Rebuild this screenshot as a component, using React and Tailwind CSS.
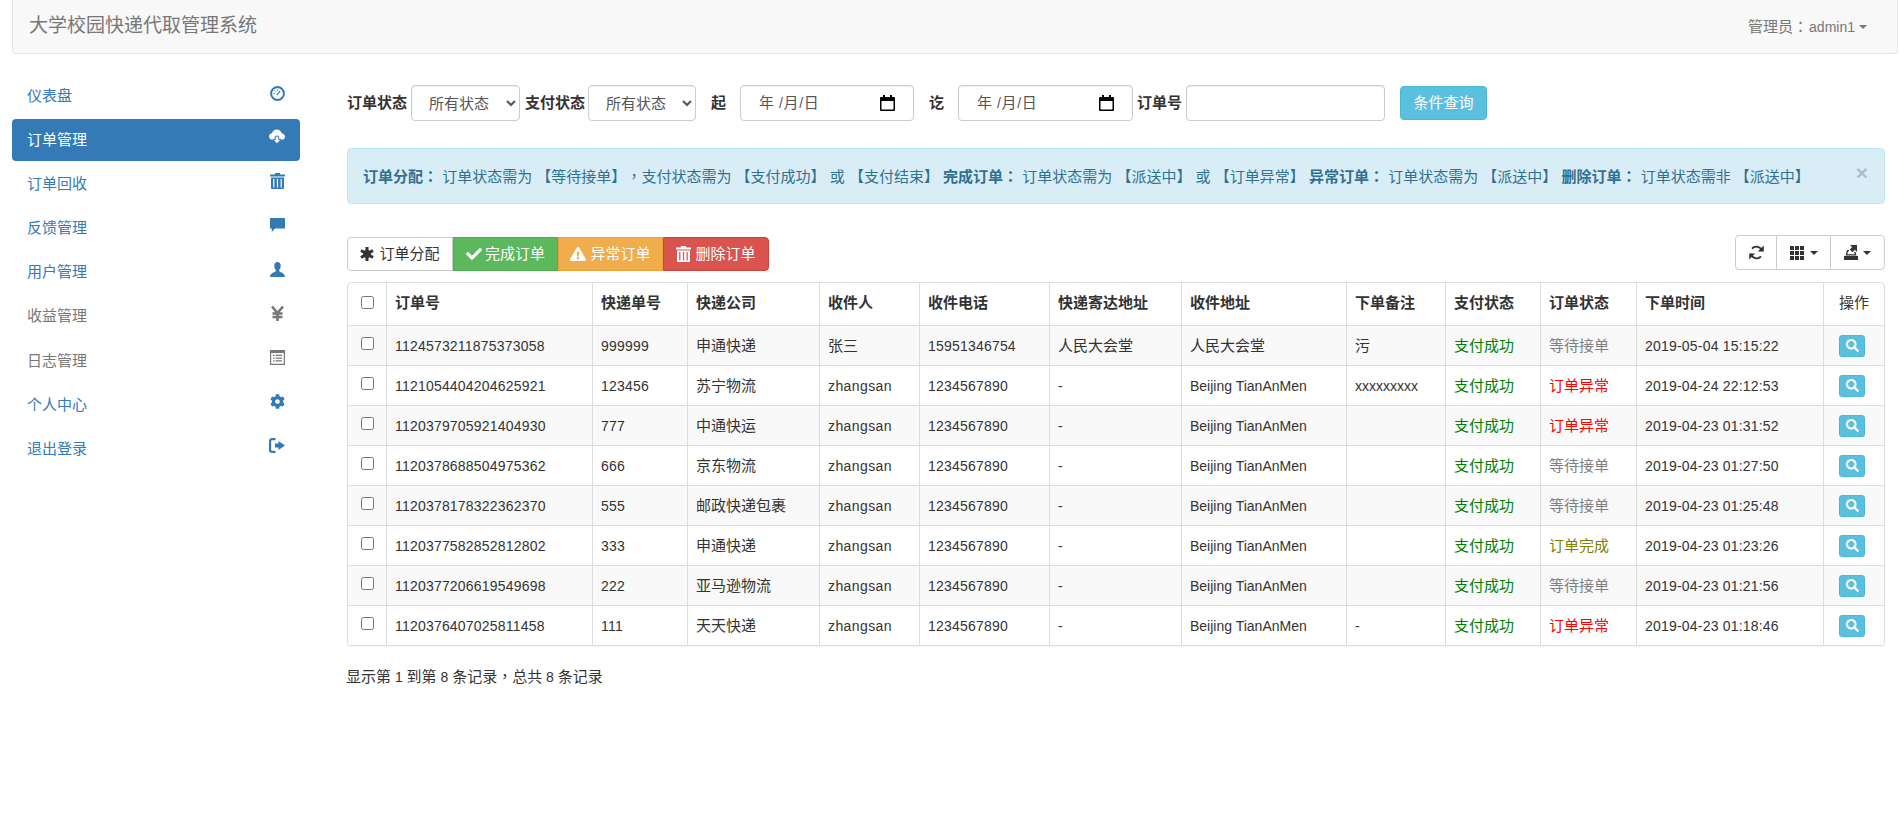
import { FaCheck, FaCog, FaExclamationTriangle, FaSearch } from "react-icons/fa";

const DashIcon = () => (
  <svg width="15" height="15" viewBox="0 0 15 15" fill="none" stroke="currentColor">
    <circle cx="7.5" cy="7.5" r="6.4" strokeWidth="2" />
    <path d="M6.8 9.2 10.2 4.8" strokeWidth="1.2" />
    <path d="M3.5 7.5h1.2M7.5 3.4v1.2M4.6 4.7l.8.8" strokeWidth="1" />
  </svg>
);
const CloudIcon = () => (
  <svg width="16" height="16" viewBox="0 0 16 16" fill="currentColor">
    <path d="M3.5 10.8C1.5 10.8 0 9.3 0 7.5 0 5.8 1.3 4.5 3 4.3 3.6 2 5.5.6 7.8.6c2.5 0 4.5 1.7 5 4 1.8.2 3.2 1.4 3.2 3.1 0 1.7-1.4 3.1-3.2 3.1z" />
    <path d="M6.3 7.2h3.4v3.2H12L8 15 4 10.4h2.3z" stroke="#337ab7" strokeWidth="1" />
  </svg>
);
const TrashIcon = () => (
  <svg width="15" height="16" viewBox="0 0 15 16" fill="currentColor">
    <path d="M5.2 0h4.6l.5 1.5H15v2H0v-2h4.7z" />
    <path fillRule="evenodd" d="M1 4.5h13V15a1 1 0 0 1-1 1H2a1 1 0 0 1-1-1zM3.2 6v8.500h1.200V6zM6.900 6v8.500h1.200V6zM10.600 6v8.500h1.200V6z" />
  </svg>
);
const CommentIcon = () => (
  <svg width="15" height="14" viewBox="0 0 15 14" fill="currentColor">
    <path d="M0 0h15v10.500H5L1.800 14v-3.500H0z" />
  </svg>
);
const UserIcon = () => (
  <svg width="15" height="15" viewBox="0 0 15 15" fill="currentColor">
    <path d="M7.500 0C5.500 0 4.300 1.500 4.300 3.700c0 1.500.5 3 1.400 4v1.500C4 10.500 0 11 0 15h15c0-4-4-4.500-5.700-5.800V7.700c.9-1 1.400-2.500 1.400-4C10.700 1.500 9.500 0 7.500 0z" />
  </svg>
);
const YenIcon = () => (
  <svg width="15" height="15" viewBox="0 0 15 15" fill="none" stroke="currentColor" strokeWidth="2.600">
    <path d="M2 .5 7.500 7 13 .5M7.500 7v8M2.500 7.500h10M2.500 11h10" />
  </svg>
);
const ListIcon = () => (
  <svg width="15" height="15" viewBox="0 0 15 15" fill="currentColor">
    <path fillRule="evenodd" d="M0 0h15v15H0zM1.200 3v10.800h12.600V3z" />
    <path d="M3 4.800h1.500V6H3zM5.500 4.800H12V6H5.500zM3 7.500h1.500v1.200H3zM5.500 7.500H12v1.200H5.500zM3 10.200h1.500v1.200H3zM5.500 10.200H12v1.200H5.500z" />
  </svg>
);
const LogoutIcon = () => (
  <svg width="16" height="15" viewBox="0 0 16 15" fill="currentColor">
    <path d="M6.500 1.200H3a2 2 0 0 0-2 2v8.600a2 2 0 0 0 2 2h3.500" fill="none" stroke="currentColor" strokeWidth="2.300" />
    <path d="M6 5.500h3.500V3l6.500 4.500L9.500 12V9.500H6z" />
  </svg>
);
const AsteriskIcon = () => (
  <svg width="14" height="14" viewBox="0 0 14 14" fill="none" stroke="currentColor" strokeWidth="3">
    <circle cx="7" cy="7" r="2.500" fill="currentColor" />
    <path d="M7 0v14M1 3.500l12 7M13 3.500l-12 7" />
  </svg>
);
const TrashSmall = () => (
  <svg width="15" height="16" viewBox="0 0 15 16" fill="currentColor">
    <path d="M5.200 0h4.600l.5 1.500H15v2H0v-2h4.700z" />
    <path fillRule="evenodd" d="M1 4.500h13V15a1 1 0 0 1-1 1H2a1 1 0 0 1-1-1zM3.200 6v8.500h1.200V6zM6.900 6v8.500h1.200V6zM10.600 6v8.500h1.200V6z" />
  </svg>
);
const RefreshIcon = () => (
  <svg width="15" height="15" viewBox="0 0 15 15" fill="currentColor">
    <path d="M13 6.200A5.800 5.800 0 0 0 3 3.600M2 8.800a5.800 5.800 0 0 0 10 2.600" fill="none" stroke="currentColor" strokeWidth="1.800" />
    <path d="M14.800.6v6h-6zM.2 14.400v-6h6z" />
  </svg>
);
const GridIcon = () => (
  <svg width="14" height="14" viewBox="0 0 14 14" fill="currentColor">
    <path d="M0 0h4v4H0zM5 0h4v4H5zM10 0h4v4h-4zM0 5h4v4H0zM5 5h4v4H5zM10 5h4v4h-4zM0 10h4v4H0zM5 10h4v4H5zM10 10h4v4h-4z" />
  </svg>
);
const ExportIcon = () => (
  <svg width="14" height="15" viewBox="0 0 14 15" fill="currentColor">
    <path d="M0 11h14v4H0z" />
    <path d="M1.500 10.500 3 5h2v1.300H4.100L3.300 9.300h7.400L10.200 7h1.300l1 3.500z" />
    <path d="M6 0h7v7l-2.200-2.200L8.400 7.200 5.800 4.600 8.200 2.200z" />
  </svg>
);
const CalendarIcon = () => (
  <svg width="15" height="16" viewBox="0 0 15 16" fill="currentColor">
    <path fillRule="evenodd" d="M3 0h2v2h5V0h2v2h2a1 1 0 0 1 1 1v12a1 1 0 0 1-1 1H1a1 1 0 0 1-1-1V3a1 1 0 0 1 1-1h2zM1.500 6v8.500h12V6z" />
  </svg>
);
const Caret = () => (
  <span className="inline-block w-0 h-0 border-x-[4px] border-x-transparent border-t-[4px] border-t-current" />
);
// centered full-width punctuation, as in the picture
const Punct = ({ children }) => <span className="font-['Noto_Sans_CJK_TC',sans-serif]">{children}</span>;

const menu = [
  { label: "仪表盘", Icon: DashIcon },
  { label: "订单管理", Icon: CloudIcon, active: true },
  { label: "订单回收", Icon: TrashIcon },
  { label: "反馈管理", Icon: CommentIcon },
  { label: "用户管理", Icon: UserIcon },
  { label: "收益管理", Icon: YenIcon, muted: true },
  { label: "日志管理", Icon: ListIcon, muted: true },
  { label: "个人中心", Icon: FaCog },
  { label: "退出登录", Icon: LogoutIcon },
];

const heads = ["订单号", "快递单号", "快递公司", "收件人", "收件电话", "快递寄达地址", "收件地址", "下单备注", "支付状态", "订单状态", "下单时间"];

const rows = [
  ["1124573211875373058", "999999", "申通快递", "张三", "15951346754", "人民大会堂", "人民大会堂", "污", "等待接单", "2019-05-04 15:15:22"],
  ["1121054404204625921", "123456", "苏宁物流", "zhangsan", "1234567890", "-", "Beijing TianAnMen", "xxxxxxxxx", "订单异常", "2019-04-24 22:12:53"],
  ["1120379705921404930", "777", "中通快运", "zhangsan", "1234567890", "-", "Beijing TianAnMen", "", "订单异常", "2019-04-23 01:31:52"],
  ["1120378688504975362", "666", "京东物流", "zhangsan", "1234567890", "-", "Beijing TianAnMen", "", "等待接单", "2019-04-23 01:27:50"],
  ["1120378178322362370", "555", "邮政快递包裹", "zhangsan", "1234567890", "-", "Beijing TianAnMen", "", "等待接单", "2019-04-23 01:25:48"],
  ["1120377582852812802", "333", "申通快递", "zhangsan", "1234567890", "-", "Beijing TianAnMen", "", "订单完成", "2019-04-23 01:23:26"],
  ["1120377206619549698", "222", "亚马逊物流", "zhangsan", "1234567890", "-", "Beijing TianAnMen", "", "等待接单", "2019-04-23 01:21:56"],
  ["1120376407025811458", "111", "天天快递", "zhangsan", "1234567890", "-", "Beijing TianAnMen", "-", "订单异常", "2019-04-23 01:18:46"],
];

const statusColor = {
  等待接单: "text-[#808080]",
  订单异常: "text-[#ff0000]",
  订单完成: "text-[#808000]",
};

const cellText = (s) => {
  if (/[\u4e00-\u9fa5]/.test(s)) return "text-[15px]";
  if (/^[\d\- :]+$/.test(s)) return "text-[14px] tracking-[0.2px]";
  if (s === "zhangsan") return "text-[14px] tracking-[0.4px]";
  return "text-[14px]";
};

const DateBox = ({ className }) => (
  <div className={`h-[36px] w-[174px] flex items-center justify-between pl-[18px] pr-[18px] bg-white border border-[#ccc] rounded shadow-[inset_0_1px_1px_rgba(0,0,0,0.075)] text-[#555] text-[15px] ${className}`}>
    <span className="tracking-[0.6px]">年<span className="text-[14px]"> /</span>月<span className="text-[14px]">/</span>日</span>
    <span className="text-black"><CalendarIcon /></span>
  </div>
);

const StatusSelect = ({ className }) => (
  <select className={`h-[36px] w-[108px] pl-[13px] bg-white border border-[#ccc] rounded text-[#555] text-[15px] shadow-[inset_0_1px_1px_rgba(0,0,0,0.075)] ${className}`}>
    <option>所有状态</option>
  </select>
);

const Cell = ({ children, className = "" }) => (
  <td className={`h-[40px] px-[8px] border-t border-l border-[#ddd] align-middle whitespace-nowrap overflow-hidden ${cellText(String(children))} ${className}`}>
    {children}
  </td>
);

export default function App() {
  return (
    <div className="min-h-[838px] bg-white text-[#333] text-[14px] leading-[20px] font-['Liberation_Sans','Noto_Sans_CJK_SC',sans-serif] [text-spacing-trim:space-all]">
      {/* Navbar */}
      <div className="ml-[12px] mr-[1px] h-[54px] flex items-center justify-between pl-[16px] pr-[30px] bg-[#f8f8f8] border border-t-0 border-[#e7e7e7] rounded-b text-[#777]">
        <span className="text-[19px] -translate-y-px">大学校园快递代取管理系统</span>
        <span className="flex items-center">
          <span className="text-[15px]">管理员<Punct>：</Punct></span>
          <span className="ml-[1px]">admin1</span>
          <span className="ml-[4px] flex"><Caret /></span>
        </span>
      </div>

      <div className="flex">
        {/* Sidebar */}
        <div className="ml-[12px] w-[288px] mt-[21px] flex flex-col gap-[2.1px]">
          {menu.map(({ label, Icon, active, muted }) => (
            <div
              key={label}
              className={`h-[42px] px-[15px] flex items-center justify-between rounded text-[15px] ${active ? "bg-[#337ab7] text-white" : muted ? "text-[#777]" : "text-[#337ab7]"}`}
            >
              <span>{label}</span>
              <span className="-translate-y-[3px]"><Icon size={15} /></span>
            </div>
          ))}
        </div>

        {/* Main */}
        <div className="ml-[47px] w-[1538px]">
          <div className="mt-[31px] h-[36px] flex items-center">
            <b className="w-[60px] text-[15px]">订单状态</b>
            <StatusSelect className="ml-[4px] !w-[109px]" />
            <b className="ml-[5px] w-[60px] text-[15px]">支付状态</b>
            <StatusSelect className="ml-[3px]" />
            <b className="ml-[15px] w-[15px] text-[15px]">起</b>
            <DateBox className="ml-[14px]" />
            <b className="ml-[15px] w-[15px] text-[15px]">讫</b>
            <DateBox className="ml-[14px] !w-[175px]" />
            <b className="ml-[4px] w-[45px] text-[15px]">订单号</b>
            <input className="ml-[4px] h-[36px] w-[199px] px-3 bg-white border border-[#ccc] rounded shadow-[inset_0_1px_1px_rgba(0,0,0,0.075)]" />
            <button className="ml-[15px] h-[34px] w-[87px] bg-[#5bc0de] border border-[#46b8da] rounded text-white text-[15px]">条件查询</button>
          </div>

          {/* Rules alert */}
          <div className="mt-[27px] h-[56px] pl-[15px] pr-[16px] flex items-center justify-between bg-[#d9edf7] border border-[#bce8f1] rounded text-[#31708f] text-[15px] whitespace-nowrap">
            <span>
              <b>订单分配<Punct>：</Punct></b> 订单状态需为 【等待接单】<Punct>，</Punct>支付状态需为 【支付成功】 或 【支付结束】 <b>完成订单<Punct>：</Punct></b> 订单状态需为 【派送中】 或 【订单异常】 <b>异常订单<Punct>：</Punct></b> 订单状态需为 【派送中】 <b>删除订单<Punct>：</Punct></b> 订单状态需非 【派送中】
            </span>
            <span className="-translate-y-[3px] font-bold text-[21px] text-black opacity-20">×</span>
          </div>

          {/* Toolbar */}
          <div className="mt-[31px] h-[47px] flex items-start justify-between">
            <div className="mt-[2px] flex h-[34px] text-[15px]">
              <button className="w-[106px] flex items-center justify-center gap-[5px] bg-white border border-[#ccc] rounded-l"><AsteriskIcon />订单分配</button>
              <button className="w-[105px] flex items-center justify-center gap-[3px] bg-[#5cb85c] border border-[#4cae4c] text-white"><FaCheck size={16} />完成订单</button>
              <button className="w-[105px] flex items-center justify-center gap-[4px] bg-[#f0ad4e] border border-[#eea236] text-white"><FaExclamationTriangle size={16} />异常订单</button>
              <button className="w-[106px] flex items-center justify-center gap-[4px] bg-[#d9534f] border border-[#d43f3a] text-white rounded-r"><TrashSmall />删除订单</button>
            </div>
            <div className="flex h-[35px] bg-white border border-[#ccc] rounded text-[#333]">
              <button className="w-[40px] flex items-center justify-center"><RefreshIcon /></button>
              <button className="w-[54px] flex items-center justify-center gap-[6px] border-l border-[#ccc]"><GridIcon /><Caret /></button>
              <button className="w-[54px] flex items-center justify-center gap-[5px] border-l border-[#ccc]"><ExportIcon /><Caret /></button>
            </div>
          </div>

          {/* Orders table */}
          <div className="border border-[#ddd] rounded overflow-hidden shadow-[0_1px_1px_rgba(0,0,0,0.05)]">
            <table className="w-full table-fixed border-separate border-spacing-0">
              <colgroup>
                <col className="w-[38px]" />
                <col className="w-[206px]" />
                <col className="w-[95px]" />
                <col className="w-[132px]" />
                <col className="w-[100px]" />
                <col className="w-[130px]" />
                <col className="w-[132px]" />
                <col className="w-[165px]" />
                <col className="w-[99px]" />
                <col className="w-[95px]" />
                <col className="w-[96px]" />
                <col className="w-[187px]" />
                <col className="w-[61px]" />
              </colgroup>
              <thead>
                <tr className="h-[42px]">
                  <th className="text-center align-middle pb-[2px]"><input type="checkbox" className="align-middle -translate-y-[2px]" /></th>
                  {heads.map((h) => (
                    <th key={h} className="px-[8px] pb-[2px] border-l border-[#ddd] text-left text-[15px] font-bold whitespace-nowrap">{h}</th>
                  ))}
                  <th className="pb-[2px] border-l border-[#ddd] text-center text-[15px] font-normal">操作</th>
                </tr>
              </thead>
              <tbody>
                {rows.map((r, i) => (
                  <tr key={r[0]} className={i % 2 === 0 ? "bg-[#f9f9f9]" : "bg-white"}>
                    <td className="h-[40px] border-t border-[#ddd] text-center align-middle"><input type="checkbox" className="align-middle -translate-y-[3px]" /></td>
                    {r.slice(0, 8).map((v, j) => (
                      <Cell key={j}>{v}</Cell>
                    ))}
                    <Cell className="text-[#008000]">支付成功</Cell>
                    <Cell className={statusColor[r[8]]}>{r[8]}</Cell>
                    <Cell>{r[9]}</Cell>
                    <td className="h-[40px] border-t border-l border-[#ddd] align-middle">
                      <button className="ml-[15px] w-[26px] h-[22px] flex items-center justify-center bg-[#5bc0de] border border-[#46b8da] rounded-[3px] text-white"><FaSearch size={13} /></button>
                    </td>
                  </tr>
                ))}
              </tbody>
            </table>
          </div>

          <div className="mt-[20px] -ml-px text-[15px]">
            显示第<span className="text-[14px]"> 1 </span>到第<span className="text-[14px]"> 8 </span>条记录<Punct>，</Punct>总共<span className="text-[14px]"> 8 </span>条记录
          </div>
        </div>
      </div>
    </div>
  );
}
